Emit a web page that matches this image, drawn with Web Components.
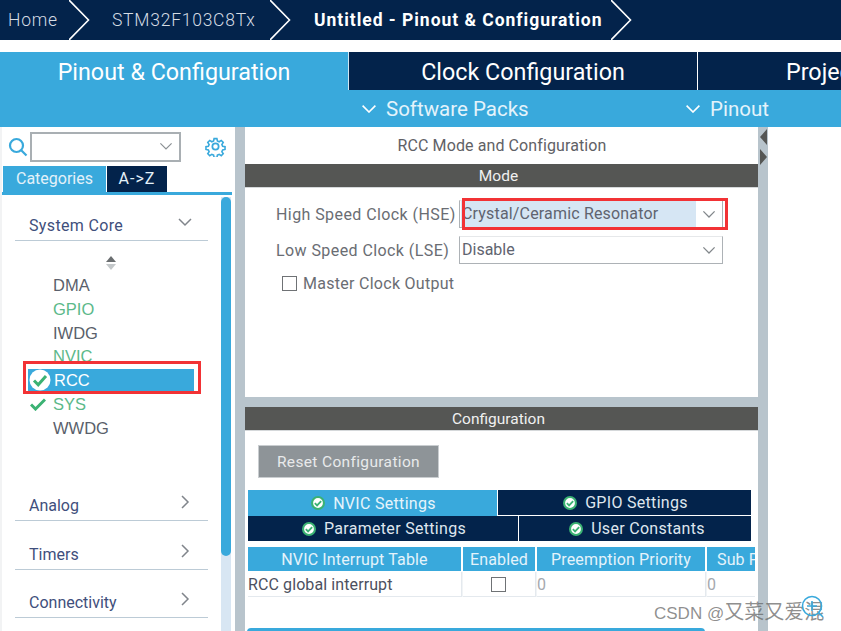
<!DOCTYPE html>
<html>
<head>
<meta charset="utf-8">
<style>
  html, body { margin: 0; height: 631px; overflow: hidden; background: #fff; }
  body { font-family: Roboto, "Liberation Sans", sans-serif; position: relative; }
</style>
</head>
<body>
<mx-crumbs>
  <mx-crumb w="70">Home</mx-crumb>
  <mx-crumb w="201" pad="42">STM32F103C8Tx</mx-crumb>
  <mx-crumb w="341" pad="43" bold>Untitled - Pinout &amp; Configuration</mx-crumb>
</mx-crumbs>
<mx-tabs></mx-tabs>
<mx-subbar></mx-subbar>
<mx-workspace>
  <mx-side slot="side">
    <mx-cat open style="height:44px;letter-spacing:.35px">System Core</mx-cat>
    <mx-sort></mx-sort>
    <mx-periph>DMA</mx-periph>
    <mx-periph state="green">GPIO</mx-periph>
    <mx-periph>IWDG</mx-periph>
    <mx-periph state="green">NVIC</mx-periph>
    <mx-periph state="active">RCC</mx-periph>
    <mx-periph state="check">SYS</mx-periph>
    <mx-periph>WWDG</mx-periph>
    <mx-cat style="height:49px;margin-top:31px">Analog</mx-cat>
    <mx-cat style="height:49px">Timers</mx-cat>
    <mx-cat style="height:48px">Connectivity</mx-cat>
  </mx-side>
  <mx-mode slot="mode"></mx-mode>
  <mx-config slot="config"></mx-config>
</mx-workspace>
<mx-mark>CSDN @<span style="font-size:20px">又菜又爱混</span></mx-mark>

<script>
const NAVY = "#03234b", BLUE = "#39a9dc", BAR = "#555654", GUTTER = "#b8c4cc";
const CHEV = (w, c) => `<svg width="${w}" height="${w * 0.6}" viewBox="0 0 20 12" fill="none" stroke="${c}" stroke-width="2"><path d="M2 2l8 8 8-8"/></svg>`;
const OK = (size) => `<svg width="${size}" height="${size}" viewBox="0 0 20 20" style="flex:none"><circle cx="10" cy="10" r="8.5" fill="#fff" stroke="#3bb273" stroke-width="3"/><path d="M5.5 10.2l3.2 3.2 5.8-6" fill="none" stroke="#3bb273" stroke-width="2.6"/></svg>`;

class MxCrumbs extends HTMLElement {
  constructor() { super(); this.attachShadow({ mode: "open" }); }
  connectedCallback() {
    this.shadowRoot.innerHTML = `<style>
      :host { display: flex; height: 40px; background: ${NAVY}; overflow: hidden; }
    </style><slot></slot>`;
  }
}
customElements.define("mx-crumbs", MxCrumbs);

class MxCrumb extends HTMLElement {
  constructor() { super(); this.attachShadow({ mode: "open" }); }
  connectedCallback() {
    const w = this.getAttribute("w"), pad = this.getAttribute("pad") || 8;
    const bold = this.hasAttribute("bold");
    this.shadowRoot.innerHTML = `<style>
      :host { display: flex; align-items: center; height: 40px; width: ${w}px; flex: none; position: relative; box-sizing: border-box; padding-left: ${pad}px; padding-bottom: 1px;
        color: ${bold ? "#fff" : "#d5dce4"}; font-size: 17.5px; font-weight: ${bold ? 700 : 300}; letter-spacing: ${bold ? "0.97px" : "0.75px"}; white-space: nowrap; }
      svg { position: absolute; right: -20px; top: 0; }
    </style><slot></slot>
    <svg width="21" height="40" viewBox="0 0 21 40" fill="none" stroke="#fff" stroke-width="1.6"><path d="M0 0l19.5 20L0 40"/></svg>`;
  }
}
customElements.define("mx-crumb", MxCrumb);

class MxTabs extends HTMLElement {
  constructor() { super(); this.attachShadow({ mode: "open" }); }
  connectedCallback() {
    this.shadowRoot.innerHTML = `<style>
      :host { display: flex; height: 38px; margin-top: 12px; background: ${NAVY}; overflow: hidden; color: #fff; font-size: 23.3px; }
      div { display: flex; align-items: center; justify-content: center; flex: none; box-sizing: border-box; padding-top: 2px; border-right: 1px solid #fff; white-space: nowrap; }
      .a { width: 349px; background: ${BLUE}; border-right-color: #cfe6f3; }
      .b { width: 349px; }
      .c { width: 143px; border: 0; justify-content: flex-start; padding-left: 88px; }
    </style>
    <div class="a">Pinout &amp; Configuration</div><div class="b">Clock Configuration</div><div class="c">Project Manager</div>`;
  }
}
customElements.define("mx-tabs", MxTabs);

class MxSubbar extends HTMLElement {
  constructor() { super(); this.attachShadow({ mode: "open" }); }
  connectedCallback() {
    this.shadowRoot.innerHTML = `<style>
      :host { display: flex; height: 37px; background: ${BLUE}; color: #e4f3fb; font-size: 20.5px; box-sizing: border-box; padding: 1px 0 0 361px; overflow: hidden; white-space: nowrap; }
      div { display: flex; align-items: center; gap: 9px; flex: none; }
      .a { width: 324px; }
      svg { margin-top: -1px; }
    </style>
    <div class="a">${CHEV(16, "#fff")}<span>Software Packs</span></div>
    <div>${CHEV(16, "#fff")}<span>Pinout</span></div>`;
  }
}
customElements.define("mx-subbar", MxSubbar);

class MxWorkspace extends HTMLElement {
  constructor() { super(); this.attachShadow({ mode: "open" }); }
  connectedCallback() {
    this.shadowRoot.innerHTML = `<style>
      :host { display: grid; grid-template-columns: 235px 10px 513px 10px 73px; height: 504px; overflow: hidden; }
      .g { background: ${GUTTER}; }
      .main { display: flex; flex-direction: column; min-width: 0; overflow: hidden; }
      .split { height: 10px; flex: none; background: ${GUTTER}; }
      .r { position: relative; }
      .r svg { position: absolute; left: 1px; top: 0; }
    </style>
    <slot name="side"></slot>
    <div class="g"></div>
    <div class="main"><slot name="mode"></slot><div class="split"></div><slot name="config"></slot></div>
    <div class="g r"><svg width="9" height="40" viewBox="0 0 9 40" fill="#555654"><path d="M8 2v16L1 10zM1 22v16l7-8z"/></svg></div>
    <div></div>`;
  }
}
customElements.define("mx-workspace", MxWorkspace);

class MxSide extends HTMLElement {
  constructor() { super(); this.attachShadow({ mode: "open" }); }
  connectedCallback() {
    this.shadowRoot.innerHTML = `<style>
      :host { display: block; position: relative; overflow: hidden; background: #fff; border-left: 2px solid #f2f3f4; box-sizing: border-box; height: 504px; }
      .top { display: flex; align-items: center; height: 39px; padding-left: 6px; }
      .combo { display: flex; align-items: center; justify-content: flex-end; box-sizing: border-box; width: 151px; height: 30px; margin-left: 2px; padding-right: 6px; border: 2px solid #a9afb3; }
      .gear { margin-left: 24px; }
      .tabs { display: flex; height: 26px; padding-left: 1px; color: #e3f1f9; font-size: 16px; }
      .tabs div { display: flex; align-items: center; justify-content: center; box-sizing: border-box; padding-bottom: 1px; }
      .t1 { width: 103px; background: ${BLUE}; }
      .t2 { width: 60px; background: ${NAVY}; margin-left: 1px; letter-spacing: 1px; }
      .line { height: 3px; background: ${BLUE}; width: 231px; margin-left: -1px; margin-bottom: 2px; }
      .list { padding: 0 27px 0 13px; }
      .track { position: absolute; left: 219px; top: 70px; bottom: 0; width: 10px; background: #d8e6f3; }
      .thumb { height: 359px; background: ${BLUE}; border-radius: 5px; }
    </style>
    <div class="top">
      <svg width="20" height="20" viewBox="0 0 20 20" fill="none" stroke="${BLUE}" stroke-width="2.2"><circle cx="8.5" cy="8.5" r="6.5"/><path d="M13 13l5.5 5.5"/></svg>
      <div class="combo">${CHEV(14, "#8b9094").replace('stroke-width="2"', 'stroke-width="1.7"')}</div>
      <svg class="gear" width="21" height="21" viewBox="0 0 24 24" fill="none" stroke="${BLUE}" stroke-width="2"><circle cx="12" cy="12" r="3.6"/><path d="M10.2 2h3.6l.6 3 2.3 1 2.6-1.7 2.5 2.5-1.7 2.6 1 2.3 3 .6v3.4l-3 .6-1 2.3 1.7 2.6-2.5 2.5-2.6-1.7-2.3 1-.6 3h-3.6l-.6-3-2.3-1-2.6 1.7-2.5-2.5 1.7-2.6-1-2.3-3-.6v-3.4l3-.6 1-2.3-1.7-2.6 2.5-2.5 2.6 1.7 2.3-1z" transform="translate(1.2 1.2) scale(.9)"/></svg>
    </div>
    <div class="tabs"><div class="t1">Categories</div><div class="t2">A-&gt;Z</div></div>
    <div class="line"></div>
    <div class="list"><slot></slot></div>
    <div class="track"><div class="thumb"></div></div>`;
  }
}
customElements.define("mx-side", MxSide);

class MxCat extends HTMLElement {
  constructor() { super(); this.attachShadow({ mode: "open" }); }
  connectedCallback() {
    const open = this.hasAttribute("open");
    const arrow = open
      ? `<svg width="14" height="9" viewBox="0 0 14 9" fill="none" stroke="#80858b" stroke-width="1.5"><path d="M1 1l6 6 6-6"/></svg>`
      : `<svg width="9" height="14" viewBox="0 0 9 14" fill="none" stroke="#80858b" stroke-width="1.5"><path d="M1 1l6 6-6 6"/></svg>`;
    this.shadowRoot.innerHTML = `<style>
      :host { display: flex; align-items: flex-end; justify-content: space-between; box-sizing: border-box; border-bottom: 1.5px solid #bccbd6; padding: 0 17px 5px 14px; color: #3f4f7c; font-size: 16px; }
      svg { margin-bottom: ${open ? 8 : 6}px; margin-right: ${open ? -1 : 1}px; }
    </style><slot></slot>${arrow}`;
  }
}
customElements.define("mx-cat", MxCat);

class MxSort extends HTMLElement {
  constructor() { super(); this.attachShadow({ mode: "open" }); }
  connectedCallback() {
    this.shadowRoot.innerHTML = `<style>
      :host { display: flex; justify-content: center; box-sizing: border-box; height: 33px; padding-top: 15px; margin-right: 2px; }
    </style>
    <svg width="10" height="14" viewBox="0 0 10 14"><path d="M5 0l5 6H0z" fill="#6a6e70"/><path d="M5 14L0 8h10z" fill="#c4c8ca"/></svg>`;
  }
}
customElements.define("mx-sort", MxSort);

class MxPeriph extends HTMLElement {
  constructor() { super(); this.attachShadow({ mode: "open" }); }
  connectedCallback() {
    const state = this.getAttribute("state") || "";
    const color = { green: "#5cb98a", check: "#5cb98a", active: "#fff" }[state] || "#5a5f6b";
    let icon = "";
    if (state === "check") icon = `<svg class="i" style="left:15px;top:5px" width="16" height="13" viewBox="0 0 16 13" fill="none" stroke="#3bb273" stroke-width="3"><path d="M1 6.5l4.5 4.5L15 1.5"/></svg>`;
    if (state === "active") icon = `<svg class="i" style="left:14px;top:0" width="22" height="22" viewBox="0 0 22 22"><circle cx="11" cy="11" r="10.5" fill="#fff"/><path d="M5 11.5l4.2 4.2L17 7" fill="none" stroke="#3bb273" stroke-width="3"/></svg>`;
    this.shadowRoot.innerHTML = `<style>
      :host { display: block; position: relative; height: 23.8px; line-height: 23.8px; font-family: "Liberation Sans", sans-serif; font-size: 16.5px; color: ${color}; padding-left: 38px; }
      :host([state="active"]) .bg { position: absolute; left: 13px; top: 0; width: 166px; height: 23px; background: ${BLUE}; }
      .txt { position: relative; }
      :host([state="active"]) .txt { left: 1px; }
      .i { position: absolute; }
      .red { position: absolute; left: 8px; top: -8px; width: 178px; height: 33px; box-sizing: border-box; border: 3px solid #f23235; }
    </style>
    ${state === "active" ? `<div class="bg"></div>` : ""}${icon}<span class="txt"><slot></slot></span>
    ${state === "active" ? `<div class="red"></div>` : ""}`;
  }
}
customElements.define("mx-periph", MxPeriph);

class MxSelect extends HTMLElement {
  constructor() { super(); this.attachShadow({ mode: "open" }); }
  connectedCallback() {
    this.shadowRoot.innerHTML = `<style>
      :host { display: flex; align-items: center; position: relative; box-sizing: border-box; width: 264px; height: 28px; border: 1.5px solid #adb2b6; border-top-color: #e6e8ea; font-size: 16px; color: #5f6470; padding-left: 1px; }
      .v { flex: 1; padding-left: 1px; height: 100%; display: flex; align-items: center; margin-top: -1px; white-space: nowrap; }
      :host([sel]) .v { background: #d6e6f4; margin-right: 0; letter-spacing: .17px; }
      .c { width: 26px; flex: none; display: flex; justify-content: center; }
      .red { position: absolute; left: 2px; top: -3px; right: -6px; bottom: -3px; border: 3px solid #f23235; }
    </style>
    <div class="v"><slot></slot></div>
    <div class="c">${CHEV(14, "#82878b").replace('stroke-width="2"', 'stroke-width="1.8"')}</div>
    ${this.hasAttribute("sel") ? `<div class="red"></div>` : ""}`;
  }
}
customElements.define("mx-select", MxSelect);

class MxBar extends HTMLElement {
  constructor() { super(); this.attachShadow({ mode: "open" }); }
  connectedCallback() {
    this.shadowRoot.innerHTML = `<style>
      :host { display: flex; align-items: center; justify-content: center; height: 24px; background: ${BAR}; color: #f0f0f0; font-size: 15.5px; border-bottom: 1px solid #d5d8da; box-sizing: border-box; padding-right: 6px; }
    </style><slot></slot>`;
  }
}
customElements.define("mx-bar", MxBar);

class MxMode extends HTMLElement {
  constructor() { super(); this.attachShadow({ mode: "open" }); }
  connectedCallback() {
    this.shadowRoot.innerHTML = `<style>
      :host { display: block; height: 270px; background: #fff; color: #6a6d73; font-size: 16px; }
      .title { height: 37px; display: flex; align-items: center; justify-content: center; font-size: 16px; letter-spacing: .1px; color: #5f6166; box-sizing: border-box; padding-left: 1px; }
      .row { display: grid; grid-template-columns: 214px 264px; align-items: center; }
      .row label { padding-left: 31px; white-space: nowrap; letter-spacing: .42px; }
      .r1 { margin-top: 12px; }
      .r2 { margin-top: 8px; }
      .chk { display: flex; align-items: center; gap: 6px; margin: 10px 0 0 37px; letter-spacing: .28px; }
      .box { width: 15px; height: 15px; box-sizing: border-box; border: 1.5px solid #6f7275; }
    </style>
    <div class="title">RCC Mode and Configuration</div>
    <mx-bar>Mode</mx-bar>
    <div class="row r1"><label>High Speed Clock (HSE)</label><mx-select sel>Crystal/Ceramic Resonator</mx-select></div>
    <div class="row r2"><label>Low Speed Clock (LSE)</label><mx-select>Disable</mx-select></div>
    <div class="chk"><span class="box"></span><span>Master Clock Output</span></div>`;
  }
}
customElements.define("mx-mode", MxMode);

class MxConfig extends HTMLElement {
  constructor() { super(); this.attachShadow({ mode: "open" }); }
  connectedCallback() {
    this.shadowRoot.innerHTML = `<style>
      :host { display: block; background: #fff; overflow: hidden; font-size: 16px; flex: 1; }
      .reset { display: flex; align-items: center; justify-content: center; width: 181px; height: 33px; margin: 14px 0 12px 13px; background: #8e9498; color: #e8eaeb; font-size: 15.5px; letter-spacing: .35px; border: 1px solid #c9cdd0; box-sizing: border-box; }
      .tabs { display: grid; grid-template-columns: 249px 1px 20px 1px 232px; grid-template-rows: 25px 1px 25px; width: 503px; margin-left: 3px; color: #dfe6ee; font-size: 16px; letter-spacing: .3px; }
      .tab { display: flex; align-items: center; justify-content: center; gap: 8px; background: ${NAVY}; white-space: nowrap; padding-left: 2px; }
      .on { background: ${BLUE}; color: #e6f4fb; grid-row: 1 / span 2; }
      .g2 { grid-column: 3 / span 3; }
      .p { grid-column: 1 / span 3; grid-row: 3; }
      .u { grid-column: 5; grid-row: 3; padding-left: 4px; }
      .tbl { display: grid; grid-template-columns: 213px 72px 168px 48px; column-gap: 2px; width: 507px; margin: 6px 0 0 3px; overflow: hidden; background: #fff; }
      .h { background: ${BLUE}; color: #e4f3fb; height: 24px; display: flex; align-items: center; justify-content: center; white-space: nowrap; letter-spacing: .15px; overflow: hidden; margin-bottom: 1px; }
      .sub { justify-content: flex-start; padding-left: 10px; }
      .d { height: 24px; display: flex; align-items: center; border-bottom: 1.5px solid #e4e9ee; color: #4c5060; white-space: nowrap; box-shadow: 1.5px 0 0 #e4e9ee; letter-spacing: .1px; }
      .n { color: #a5a9ae; }
      .c { justify-content: center; padding-right: 2px; }
      .box { width: 15px; height: 15px; box-sizing: border-box; border: 1.5px solid #6f7275; }
      .pb { height: 4px; margin: 31px 0 0 2px; width: 458px; background: ${BLUE}; border-radius: 4px 4px 0 0; }
    </style>
    <mx-bar>Configuration</mx-bar>
    <div class="reset">Reset Configuration</div>
    <div class="tabs">
      <div class="tab on">${OK(14)}<span>NVIC Settings</span></div>
      <div class="tab g2">${OK(14)}<span>GPIO Settings</span></div>
      <div class="tab p">${OK(14)}<span>Parameter Settings</span></div>
      <div class="tab u">${OK(14)}<span>User Constants</span></div>
    </div>
    <div class="tbl">
      <div class="h">NVIC Interrupt Table</div><div class="h">Enabled</div><div class="h">Preemption Priority</div><div class="h sub">Sub Priority</div>
      <div class="d">RCC global interrupt</div><div class="d c"><span class="box"></span></div><div class="d n">0</div><div class="d n">0</div>
    </div>
    <div class="pb"></div>`;
  }
}
customElements.define("mx-config", MxConfig);

class MxMark extends HTMLElement {
  constructor() { super(); this.attachShadow({ mode: "open" }); }
  connectedCallback() {
    this.shadowRoot.innerHTML = `<style>
      :host { position: absolute; left: 654px; top: 600px; height: 24px; line-height: 24px; color: rgba(100,100,100,.72); font-family: "Liberation Sans", "Noto Sans CJK SC", sans-serif; font-size: 17px; white-space: nowrap; }
      svg { position: absolute; left: 147px; top: -5px; }
    </style>
    <svg width="24" height="25" viewBox="0 0 24 25" fill="none" stroke="#39a9dc" stroke-width="1.6"><circle cx="11" cy="11" r="9.5"/><path d="M11 6v10M6 11h10M18 18l4 4"/></svg>
    <slot></slot>`;
  }
}
customElements.define("mx-mark", MxMark);
</script>
</body>
</html>
